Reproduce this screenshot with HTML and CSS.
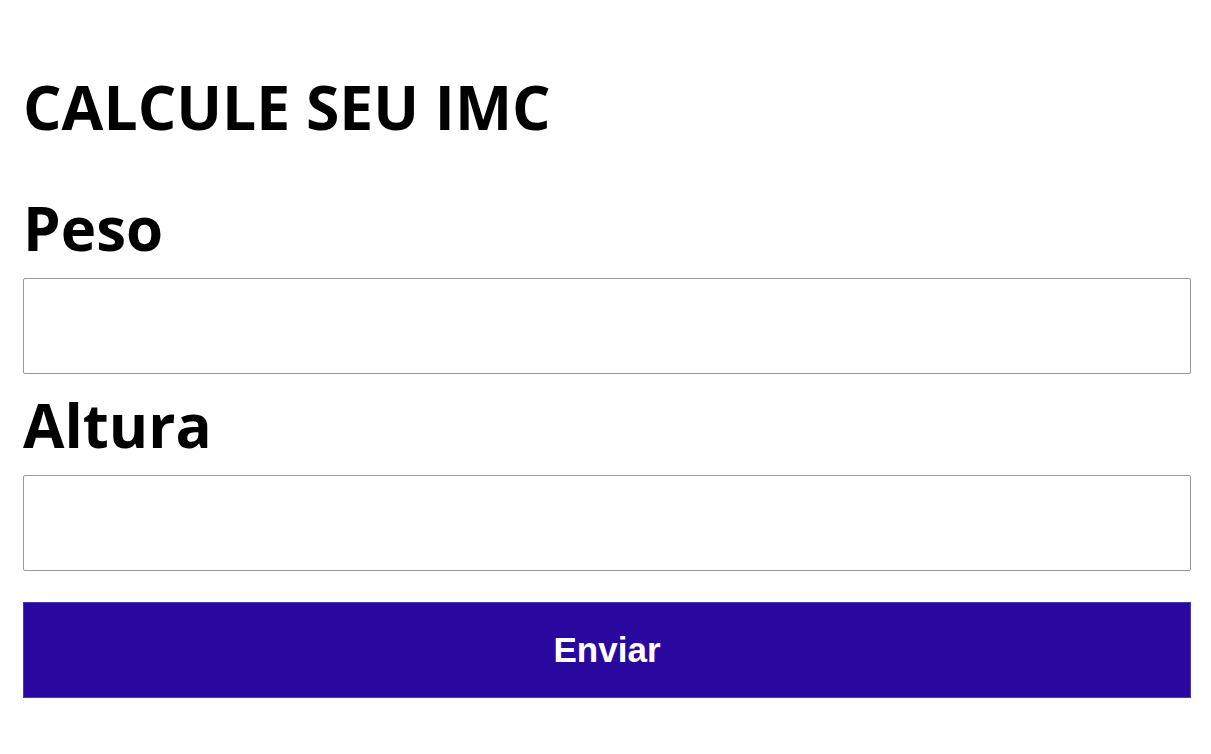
FILE: index.html
```html
<!DOCTYPE html>
<html lang="pt-BR">
<head>
<meta charset="utf-8">
<title>Calcule seu IMC</title>
<link rel="stylesheet" href="styles.css">
</head>
<body>
<main class="page">
  <h1 class="title">CALCULE SEU IMC</h1>
  <form class="form">
    <label class="label" for="peso">Peso</label>
    <input class="field" id="peso" type="text">
    <label class="label" for="altura">Altura</label>
    <input class="field" id="altura" type="text">
    <button class="submit" type="button">Enviar</button>
  </form>
</main>
</body>
</html>
```
FILE: styles.css
```css
html, body {
  margin: 0;
  padding: 0;
  background: #ffffff;
}
.page {
  padding: 71px 20px 0 23px;
  font-family: "Open Sans", sans-serif;
  color: #000;
}
.title {
  margin: 0;
  font-size: 60.6px;
  font-weight: 700;
  line-height: 72px;
}
.form {
  display: flex;
  flex-direction: column;
  margin-top: 34px;
}
.label {
  font-size: 60px;
  font-weight: 700;
  line-height: 72px;
  margin-top: 15px;
  margin-bottom: 14px;
}
.field {
  box-sizing: border-box;
  height: 96px;
  border: 1px solid #999;
  border-radius: 2px;
  margin: 0;
  font-size: 30px;
}
.submit {
  margin-top: 31px;
  height: 96px;
  border: 1px solid #4a34b8;
  background: #29089f;
  color: #fff;
  font-family: "Liberation Sans", Arial, sans-serif;
  font-weight: 700;
  font-size: 35px;
}
```
